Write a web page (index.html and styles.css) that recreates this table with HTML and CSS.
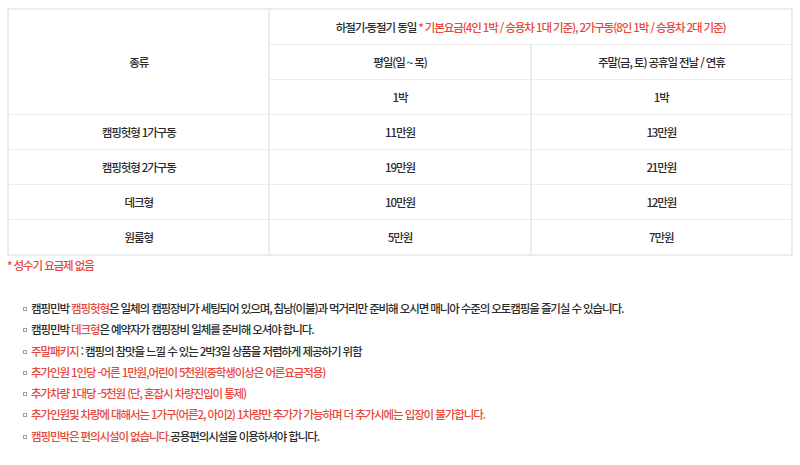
FILE: index.html
```html
<!DOCTYPE html>
<html lang="ko">
<head>
<meta charset="utf-8">
<link rel="stylesheet" href="styles.css">
</head>
<body>
<table class="price">
  <tr>
    <td rowspan="3">종류</td>
    <td colspan="2">하절기·동절기 동일 <span class="red">* 기본요금(4인 1박 / 승용차 1대 기준), 2가구동(8인 1박 / 승용차 2대 기준)</span></td>
  </tr>
  <tr>
    <td>평일(일 ~ 목)</td>
    <td>주말(금, 토) 공휴일 전날 / 연휴</td>
  </tr>
  <tr>
    <td>1박</td>
    <td>1박</td>
  </tr>
  <tr><td>캠핑헛형 1가구동</td><td>11만원</td><td>13만원</td></tr>
  <tr><td>캠핑헛형 2가구동</td><td>19만원</td><td>21만원</td></tr>
  <tr><td>데크형</td><td>10만원</td><td>12만원</td></tr>
  <tr><td>원룸형</td><td>5만원</td><td>7만원</td></tr>
</table>
<p class="note">* 성수기 요금제 없음</p>
<ul class="info">
  <li>캠핑민박 <span class="red">캠핑헛형</span>은 일체의 캠핑장비가 세팅되어 있으며, 침낭(이불)과 먹거리만 준비해 오시면 매니아 수준의 오토캠핑을 즐기실 수 있습니다.</li>
  <li>캠핑민박 <span class="red">데크형</span>은 예약자가 캠핑장비 일체를 준비해 오셔야 합니다.</li>
  <li><span class="red">주말패키지</span> : 캠핑의 참맛을 느낄 수 있는 2박3일 상품을 저렴하게 제공하기 위함</li>
  <li class="red">추가인원 1인당 -어른 1만원,어린이 5천원(중학생이상은 어른요금적용)</li>
  <li class="red">추가차량 1대당 -5천원 (단, 혼잡시 차량진입이 통제)</li>
  <li class="red">추가인원및 차량에 대해서는 1가구(어른2, 아이2) 1차량만 추가가 가능하며 더 추가시에는 입장이 불가합니다.</li>
  <li><span class="red">캠핑민박은 편의시설이 없습니다.</span>공용편의시설을 이용하셔야 합니다.</li>
</ul>
</body>
</html>
```
FILE: styles.css
```css
html, body {
  margin: 0;
  background: #fff;
}
body {
  padding: 8px 7px 0 7px;
  font-family: "Noto Sans CJK KR", "Noto Sans", sans-serif;
  font-size: 11.5px;
  font-weight: 500;
  color: #2b2b2b;
  letter-spacing: -1.1px;
}
.red { color: #e8473b; }
.price {
  width: 786px;
  border-collapse: collapse;
  table-layout: fixed;
  border: 2px solid #ececec;
}
.price td {
  border: 1px solid #ececec;
  border-left-width: 2px;
  border-right-width: 2px;
  text-align: center;
  height: 34px;
  padding: 0;
  vertical-align: middle;
  line-height: 16px;
}
.note {
  margin: 0;
  padding-top: 1px;
  line-height: 16px;
  color: #e8473b;
}
.info {
  list-style: none;
  margin: 25px 0 0 0;
  padding: 0 0 0 24px;
}
.info li {
  position: relative;
  line-height: 21.3px;
}
.info li::before {
  content: "";
  position: absolute;
  left: -8px;
  top: 9px;
  width: 2px;
  height: 2px;
  border: 1px solid #a0a0a0;
}
```
